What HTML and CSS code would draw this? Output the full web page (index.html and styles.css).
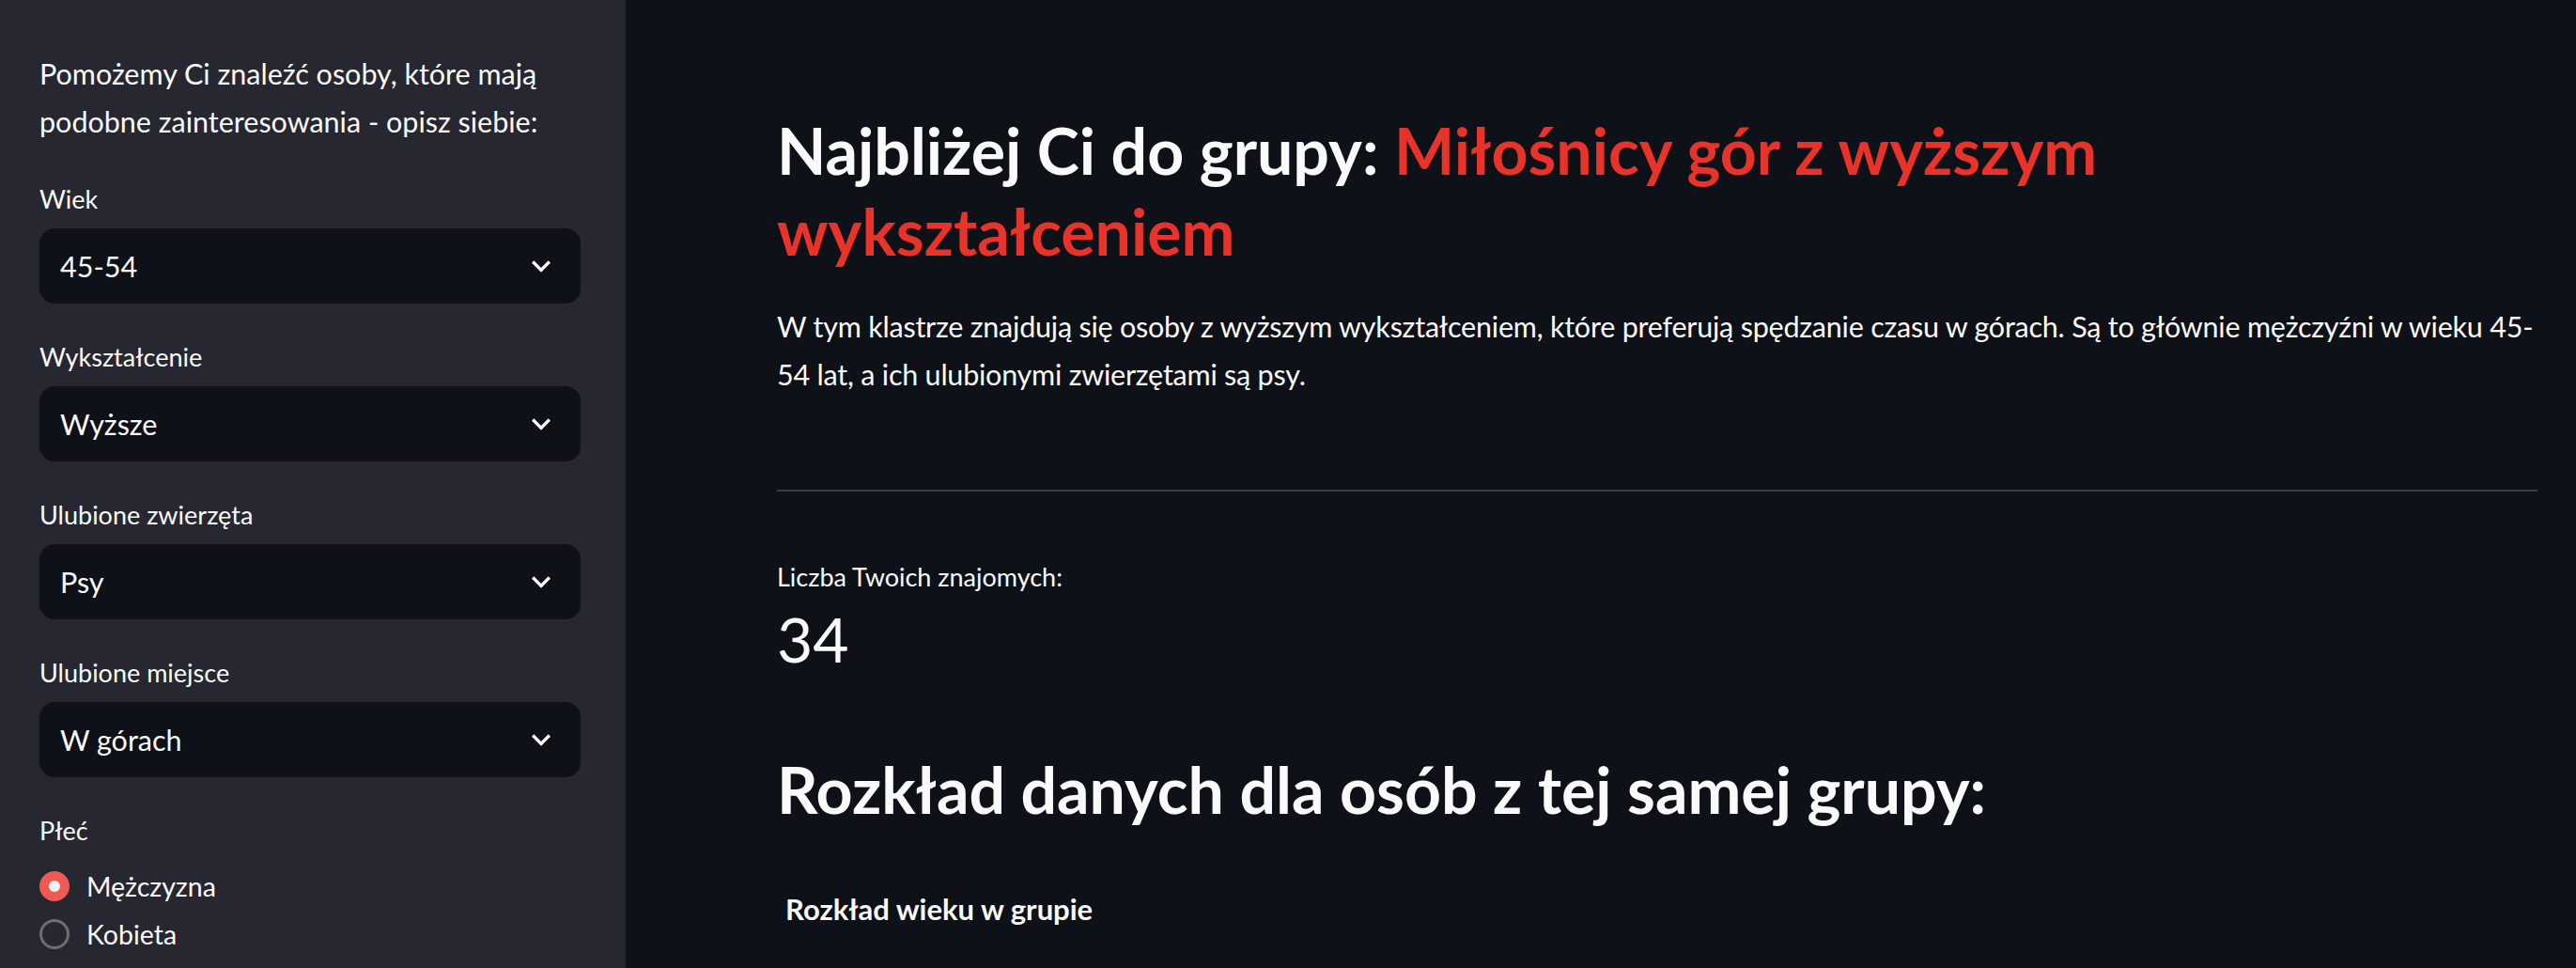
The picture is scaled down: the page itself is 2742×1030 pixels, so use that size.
FILE: index.html
```html
<!DOCTYPE html>
<html lang="pl">
<head>
<meta charset="utf-8">
<title>Znajdź znajomych</title>
<link rel="stylesheet" href="styles.css">
</head>
<body>
<div class="app">
  <aside class="sidebar">
    <p class="intro">Pomożemy Ci znaleźć osoby, które mają podobne zainteresowania - opisz siebie:</p>

    <div class="field">
      <div class="label">Wiek</div>
      <div class="select"><span>45-54</span><svg class="chev" viewBox="0 0 24 24"><path d="M16.59 8.59L12 13.17 7.41 8.59 6 10l6 6 6-6z"/></svg></div>
    </div>

    <div class="field">
      <div class="label">Wykształcenie</div>
      <div class="select"><span>Wyższe</span><svg class="chev" viewBox="0 0 24 24"><path d="M16.59 8.59L12 13.17 7.41 8.59 6 10l6 6 6-6z"/></svg></div>
    </div>

    <div class="field">
      <div class="label">Ulubione zwierzęta</div>
      <div class="select"><span>Psy</span><svg class="chev" viewBox="0 0 24 24"><path d="M16.59 8.59L12 13.17 7.41 8.59 6 10l6 6 6-6z"/></svg></div>
    </div>

    <div class="field">
      <div class="label">Ulubione miejsce</div>
      <div class="select"><span>W górach</span><svg class="chev" viewBox="0 0 24 24"><path d="M16.59 8.59L12 13.17 7.41 8.59 6 10l6 6 6-6z"/></svg></div>
    </div>

    <div class="field">
      <div class="label">Płeć</div>
      <div class="radios">
        <div class="option"><span class="dot checked"></span><span>Mężczyzna</span></div>
        <div class="option"><span class="dot"></span><span>Kobieta</span></div>
      </div>
    </div>
  </aside>

  <main class="main">
    <h2 class="title">Najbliżej Ci do grupy: <span class="accent">Miłośnicy gór z wyższym wykształceniem</span></h2>
    <p class="desc">W tym klastrze znajdują się osoby z wyższym wykształceniem, które preferują spędzanie czasu w górach. Są to głównie mężczyźni w wieku 45-54 lat, a ich ulubionymi zwierzętami są psy.</p>
    <hr class="divider">
    <div class="metric">
      <div class="metric-label">Liczba Twoich znajomych:</div>
      <div class="metric-value">34</div>
    </div>
    <h2 class="section">Rozkład danych dla osób z tej samej grupy:</h2>
    <div class="chart-title">Rozkład wieku w grupie</div>
  </main>
</div>
</body>
</html>
```

FILE: styles.css
```css
html, body {
  margin: 0;
  height: 100%;
  background: #0e1117;
}

body {
  font-family: Lato, "Noto Sans", sans-serif;
  color: #fafafa;
  overflow: hidden;
}

.app {
  display: flex;
  height: 1030px;
}

/* ---------- sidebar ---------- */
.sidebar {
  width: 666px;
  flex: none;
  box-sizing: border-box;
  background: #262730;
  padding: 53px 48px 0 42px;
  display: flex;
  flex-direction: column;
  gap: 32px;
}

.intro {
  margin: 0;
  font-size: 30.5px;
  line-height: 51.2px;
}

.field {
  display: flex;
  flex-direction: column;
}

.label {
  height: 48px;
  margin-bottom: 8px;
  display: flex;
  align-items: center;
  font-size: 27px;
  line-height: 1;
}

.select {
  height: 80px;
  box-sizing: border-box;
  border-radius: 16px;
  background: #0e1117;
  display: flex;
  align-items: center;
  justify-content: space-between;
  padding: 0 22px;
  font-size: 30.5px;
}

.chev {
  width: 40px;
  height: 40px;
  fill: #fafafa;
  flex: none;
}

.radios {
  margin-top: 2px;
  display: flex;
  flex-direction: column;
}

.option {
  height: 51px;
  display: flex;
  align-items: center;
  gap: 18px;
  font-size: 28.5px;
}

.dot {
  width: 32px;
  height: 32px;
  flex: none;
  box-sizing: border-box;
  border-radius: 50%;
  border: 3px solid #6e6f75;
  display: grid;
  place-items: center;
}

.dot.checked {
  border: none;
  background: #f05a55;
}

.dot.checked::after {
  content: "";
  width: 12px;
  height: 12px;
  border-radius: 50%;
  background: #f0f2f6;
}

/* ---------- main ---------- */
.main {
  flex: 1;
  min-width: 0;
  padding: 117px 41px 0 161px;
  display: flex;
  flex-direction: column;
}

.title,
.section {
  margin: 0;
  font-size: 68px;
  line-height: 86.4px;
  font-weight: 700;
}

.accent {
  color: #e8332a;
}

.desc {
  margin: 32px 0 0;
  font-size: 30.5px;
  line-height: 51.2px;
  letter-spacing: -0.22px;
}

.divider {
  margin: 97px 0 0;
  border: none;
  height: 2px;
  background: #3b3d44;
}

.metric {
  margin-top: 66px;
}

.metric-label {
  height: 48px;
  display: flex;
  align-items: center;
  font-size: 27px;
  line-height: 1;
}

.metric-value {
  font-size: 66px;
  line-height: 86.4px;
}

.section {
  margin-top: 73px;
}

.chart-title {
  margin-top: 65px;
  padding-left: 9px;
  font-size: 31px;
  line-height: 38.4px;
  font-weight: 700;
}
```
